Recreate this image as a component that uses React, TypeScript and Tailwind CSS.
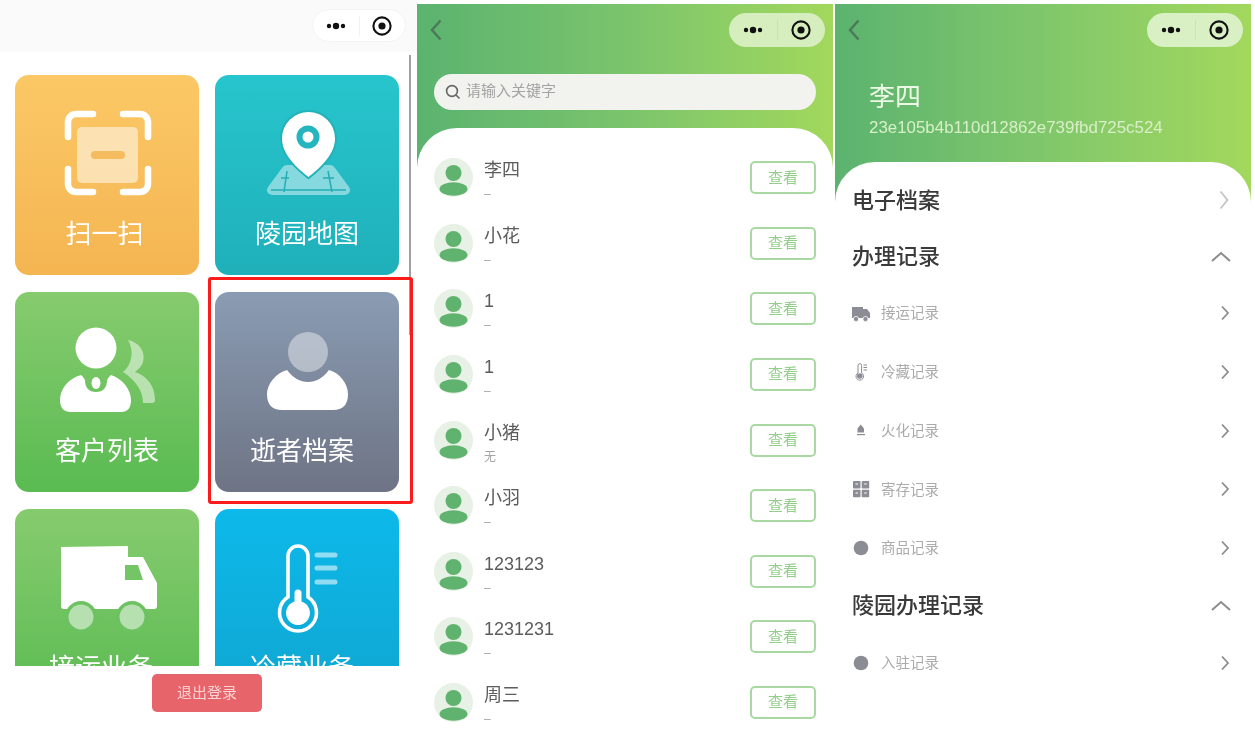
import type { ReactNode } from 'react';

type Card = { label: string; bg: string; labelClass?: string; icon: ReactNode };

function ScanIcon() {
  return (
    <svg width="184" height="140" viewBox="0 0 184 140">
      <rect x="62" y="52" width="61" height="56" rx="5" fill="#fff" fillOpacity="0.52" />
      <rect x="76" y="76" width="34" height="8" rx="4" fill="#f5bb5f" />
      <g fill="none" stroke="#fff" strokeWidth="6.5" strokeLinecap="round">
        <path d="M53 62V47a8 8 0 0 1 8-8h17" />
        <path d="M108 39h17a8 8 0 0 1 8 8v15" />
        <path d="M53 94v15a8 8 0 0 0 8 8h17" />
        <path d="M133 94v15a8 8 0 0 1-8 8h-17" />
      </g>
    </svg>
  );
}

function PinIcon() {
  const pin = 'M93.5 37a26.5 26.5 0 0 1 26.5 26.5c0 17-17 31-26.5 38.5c-9.5-7.5-26.5-21.5-26.5-38.5A26.5 26.5 0 0 1 93.5 37z';
  return (
    <svg width="184" height="140" viewBox="0 0 184 140">
      <path d="M72 90H115a6 6 0 0 1 5 3L134 112a5 5 0 0 1-4 8H57a5 5 0 0 1-4-8L67 93a6 6 0 0 1 5-3z" fill="#fff" fillOpacity="0.45" />
      <path d="M72 96L69 117M56 115H131M113 96L117 117M66 103H74M108 103H119" stroke="#23adb6" strokeWidth="1.5" fill="none" />
      <path d={pin} fill="#fff" stroke="#23b2ba" strokeWidth="4" paintOrder="stroke" />
      <circle cx="93" cy="62" r="11.5" fill="#25b5bf" />
      <circle cx="93" cy="62" r="5.5" fill="#fff" />
    </svg>
  );
}

function CustomerIcon() {
  return (
    <svg width="184" height="140" viewBox="0 0 184 140">
      <path d="M113 48C124 50 131 60 128 70C126 76 122 78 120 80C132 84 140 94 140 108Q140 111 137 111H128C128 98 120 88 108 80C116 74 120 60 113 48z" fill="#fff" fillOpacity="0.5" />
      <circle cx="81" cy="56" r="20.5" fill="#fff" />
      <path d="M66 83C52 87 45 98 45 108Q45 120 56 120H106Q116 120 116 108C116 98 108 87 96 83C94 85 93 86 92 88C92 96 88 100 81 100C74 100 70 96 70 88C69 86 68 85 66 83z" fill="#fff" />
      <ellipse cx="81" cy="91" rx="4.5" ry="6" fill="#fff" />
    </svg>
  );
}

function PersonIcon() {
  return (
    <svg width="184" height="140" viewBox="0 0 184 140">
      <circle cx="93" cy="60" r="20" fill="#fff" fillOpacity="0.42" />
      <path d="M72 78C78 86 85 90 93 90C101 90 108 86 114 78C125 81 133 92 133 102Q133 118 118 118H67Q52 118 52 102C52 92 61 81 72 78z" fill="#fff" />
    </svg>
  );
}

function TruckIcon() {
  return (
    <svg width="184" height="140" viewBox="0 0 184 140">
      <path d="M46 38L113 37V48H128L142 74V97Q142 100 139 100H49Q46 100 46 97z" fill="#fff" />
      <path d="M110 56H123L128 71H110z" fill="#74c566" />
      <circle cx="66" cy="108" r="16" fill="#6cc160" />
      <circle cx="117" cy="108" r="16" fill="#6cc160" />
      <circle cx="66" cy="108" r="12.5" fill="#fff" fillOpacity="0.5" />
      <circle cx="117" cy="108" r="12.5" fill="#fff" fillOpacity="0.5" />
    </svg>
  );
}

function ThermoIcon() {
  return (
    <svg width="184" height="140" viewBox="0 0 184 140">
      <path d="M73 47a10 10 0 0 1 20 0V88a18.5 18.5 0 1 1-20 0z" fill="none" stroke="#fff" strokeWidth="3.6" />
      <path d="M79.5 84a3.5 3.5 0 0 1 7 0V92.5a12 12 0 1 1-7 0z" fill="#fff" />
      <path d="M102 46H120M102 59H120M102 73H120" stroke="#fff" strokeOpacity="0.55" strokeWidth="5" strokeLinecap="round" />
    </svg>
  );
}

const cards: Card[] = [
  { label: '扫一扫', bg: 'from-[#fbc866] to-[#f4b551]', labelClass: 'pr-[5px]', icon: <ScanIcon /> },
  { label: '陵园地图', bg: 'from-[#27c5cd] to-[#1fb0ba]', icon: <PinIcon /> },
  { label: '客户列表', bg: 'from-[#86cb6e] to-[#59bb52]', icon: <CustomerIcon /> },
  { label: '逝者档案', bg: 'from-[#8a9cb3] to-[#6e7485]', labelClass: 'pr-[10px]', icon: <PersonIcon /> },
  { label: '接运业务', bg: 'from-[#86cb6e] to-[#59bb52]', labelClass: 'pr-[12px]', icon: <TruckIcon /> },
  { label: '冷藏业务', bg: 'from-[#0cb9ea] to-[#10a5d0]', labelClass: 'pr-[10px]', icon: <ThermoIcon /> },
];

const people = [
  { name: '李四', sub: '–' },
  { name: '小花', sub: '–' },
  { name: '1', sub: '–' },
  { name: '1', sub: '–' },
  { name: '小猪', sub: '无' },
  { name: '小羽', sub: '–' },
  { name: '123123', sub: '–' },
  { name: '1231231', sub: '–' },
  { name: '周三', sub: '–' },
];

function Capsule({ className }: { className: string }) {
  return (
    <div className={`flex items-center rounded-full ${className}`}>
      <div className="flex flex-1 justify-center">
        <svg width="24" height="10" viewBox="0 0 24 10" fill="#111">
          <circle cx="5" cy="5" r="2.2" />
          <circle cx="12" cy="5" r="3.2" />
          <circle cx="19" cy="5" r="2.2" />
        </svg>
      </div>
      <div className="h-[20px] w-px bg-black/5" />
      <div className="flex flex-1 justify-center">
        <svg width="22" height="22" viewBox="0 0 22 22" fill="none">
          <circle cx="11" cy="11" r="8.6" stroke="#111" strokeWidth="2.1" />
          <circle cx="11" cy="11" r="3.6" fill="#111" />
        </svg>
      </div>
    </div>
  );
}

function BackChevron() {
  return (
    <svg width="14" height="24" viewBox="0 0 14 24" fill="none">
      <path d="M10.5 2.5L2 12L10.5 21.5" stroke="#4c7a58" strokeWidth="2.5" />
    </svg>
  );
}

function Avatar() {
  return (
    <svg width="39" height="39" viewBox="0 0 39 39" className="shrink-0">
      <circle cx="19.5" cy="19.5" r="19.5" fill="#e8f1e5" />
      <circle cx="19.5" cy="15" r="8" fill="#5fb36f" />
      <ellipse cx="19.5" cy="31" rx="14" ry="6.8" fill="#5fb36f" />
    </svg>
  );
}

function HomePanel() {
  return (
    <div className="relative flex h-[741px] w-[417px] shrink-0 flex-col bg-white">
      <div className="flex h-[52px] justify-end bg-[#fafafa] pt-[9px] pr-[11px]">
        <Capsule className="h-[33px] w-[94px] border border-[#f3f3f3] bg-white" />
      </div>
      <div className="h-[614px] overflow-hidden pt-[23px] pl-[15px]">
        <div className="grid grid-cols-[184px_184px] gap-x-4 gap-y-[17px]">
          {cards.map((c) => (
            <div key={c.label} className={`h-[200px] rounded-[14px] bg-linear-to-b text-white ${c.bg}`}>
              {c.icon}
              <div className={`mt-[4px] text-center text-[26px] leading-[30px] ${c.labelClass ?? ''}`}>{c.label}</div>
            </div>
          ))}
        </div>
      </div>
      <div className="flex flex-1 justify-center pt-2 pr-[3px]">
        <button className="h-[38px] w-[110px] rounded-[5px] bg-[#e8646b] text-[15px] text-[#f8d5d5]">退出登录</button>
      </div>
      <div className="absolute top-[55px] left-[409px] h-[280px] w-[2px] bg-[#a0a0a0]" />
      <div className="absolute top-[277px] left-[208px] h-[227px] w-[205px] rounded-[3px] border-[3px] border-[#fb1b1b]" />
    </div>
  );
}

function ListPanel() {
  return (
    <div className="mt-1 h-[737px] w-[416px] shrink-0 overflow-hidden bg-white">
      <div className="bg-linear-to-r from-[#5bb36f] via-[#7ac46c] to-[#a2d85c] pt-[9px] pb-[40px]">
        <div className="flex items-center justify-between pr-[8px] pl-[13px]">
          <BackChevron />
          <Capsule className="h-[34px] w-[96px] bg-[#d6edbd]" />
        </div>
        <div className="mx-[17px] mt-[27px] mb-[18px] flex h-[36px] items-center gap-[5px] rounded-full bg-[#f2f2ef] px-[11px]">
          <svg width="16" height="16" viewBox="0 0 16 16" fill="none" stroke="#666" strokeWidth="1.6">
            <circle cx="7" cy="7" r="5.4" />
            <path d="M11 11L14.5 14.5" />
          </svg>
          <span className="-mt-[2px] text-[15px] text-[#a3a3a3]">请输入关键字</span>
        </div>
      </div>
      <div className="relative -mt-[40px] rounded-t-[40px] bg-white px-[17px] pt-[17px]">
        {people.map((p, i) => (
          <div key={i} className="flex h-[65.6px] items-center">
            <Avatar />
            <div className="ml-[11px] flex-1 pt-[5px]">
              <div className="text-[18px] leading-6 text-[#5c5c5c]">{p.name}</div>
              <div className="mt-[4px] text-[12px] leading-4 text-[#a5a5a5]">{p.sub}</div>
            </div>
            <button className="h-[33px] w-[66px] rounded-[5px] border-2 border-[#a9d8a3] text-[15px] text-[#93cf8a]">查看</button>
          </div>
        ))}
      </div>
    </div>
  );
}

function ChevronRight({ light }: { light?: boolean }) {
  return (
    <svg width="10" height="18" viewBox="0 0 10 18" fill="none" className={light ? '-ml-[2px] mr-[2px]' : ''}>
      <path d={light ? 'M1.5 0.5L8.5 9L1.5 17.5' : 'M2 2.5L8 9L2 15.5'} stroke={light ? '#c4c4c4' : '#8c8c8c'} strokeWidth="1.8" />
    </svg>
  );
}

function ChevronUp() {
  return (
    <svg width="20" height="11" viewBox="0 0 20 11" fill="none">
      <path d="M1 10L10 2L19 10" stroke="#8c8c8c" strokeWidth="2" />
    </svg>
  );
}

function RecordIcon({ kind }: { kind: string }) {
  return (
    <svg width="18" height="18" viewBox="0 0 18 18" fill="#8c8c95">
      {kind === 'truck' && (
        <>
          <path d="M0 3H11V5H15L18 9V14H0z" />
          <circle cx="4" cy="15" r="2.6" stroke="#fff" strokeWidth="0.8" />
          <circle cx="13.5" cy="15" r="2.6" stroke="#fff" strokeWidth="0.8" />
        </>
      )}
      {kind === 'thermo' && (
        <>
          <path d="M6 2.5a1.8 1.8 0 0 1 3.6 0V10a3.8 3.8 0 1 1-3.6 0z" fill="#fff" stroke="#8c8c95" strokeWidth="1" />
          <circle cx="7.8" cy="13" r="2.8" />
          <path d="M11.5 2H15M11.5 4.5H15M11.5 7H15" stroke="#8c8c95" strokeWidth="1" />
        </>
      )}
      {kind === 'fire' && (
        <>
          <path d="M8.7 2.5L12 6.5V10.5H5.5V6.5z" />
          <rect x="5" y="12" width="8" height="1.2" />
        </>
      )}
      {kind === 'grid' && (
        <>
          <rect x="1" y="1" width="7.5" height="7.5" rx="0.8" />
          <rect x="9.7" y="1" width="7.5" height="7.5" rx="0.8" />
          <rect x="1" y="9.7" width="7.5" height="7.5" rx="0.8" />
          <rect x="9.7" y="9.7" width="7.5" height="7.5" rx="0.8" />
          <path d="M3.5 4H6M12.2 4H14.7M3.5 13H6M12.2 13H14.7" stroke="#fff" strokeWidth="1.1" />
        </>
      )}
      {kind === 'dot' && <circle cx="9" cy="9" r="7.3" />}
    </svg>
  );
}

function RecordRow({ kind, label }: { kind: string; label: string }) {
  return (
    <div className="flex h-[58.7px] items-center pr-[21px] pl-[17px]">
      <RecordIcon kind={kind} />
      <span className="ml-[11px] flex-1 pt-[2px] text-[14.5px] text-[#ababab]">{label}</span>
      <ChevronRight />
    </div>
  );
}

function SectionRow({ label, right }: { label: string; right: ReactNode }) {
  return (
    <div className="flex h-[56px] items-center justify-between pr-[20px] pl-[17px]">
      <span className="text-[22px] font-medium text-[#3a3a3a]">{label}</span>
      {right}
    </div>
  );
}

function DetailPanel() {
  return (
    <div className="mt-1 ml-[2px] h-[737px] w-[416px] shrink-0 overflow-hidden bg-white">
      <div className="bg-linear-to-r from-[#5bb36f] via-[#80c76b] to-[#a2d85c] pt-[9px] pb-[40px]">
        <div className="flex items-center justify-between pr-[8px] pl-[13px]">
          <BackChevron />
          <Capsule className="h-[34px] w-[96px] bg-[#d9efc4]" />
        </div>
        <div className="mt-[34px] pl-[34px] text-[26px] leading-8 text-[#eef8e6]">李四</div>
        <div className="mt-[5px] mb-[24px] pl-[34px] text-[16.9px] leading-5 text-[#d8efc8]">23e105b4b110d12862e739fbd725c524</div>
      </div>
      <div className="relative -mt-[40px] rounded-t-[40px] bg-white pt-[10px]">
        <SectionRow label="电子档案" right={<ChevronRight light />} />
        <SectionRow label="办理记录" right={<ChevronUp />} />
        <RecordRow kind="truck" label="接运记录" />
        <RecordRow kind="thermo" label="冷藏记录" />
        <RecordRow kind="fire" label="火化记录" />
        <RecordRow kind="grid" label="寄存记录" />
        <RecordRow kind="dot" label="商品记录" />
        <SectionRow label="陵园办理记录" right={<ChevronUp />} />
        <RecordRow kind="dot" label="入驻记录" />
      </div>
    </div>
  );
}

export default function App() {
  return (
    <div className="flex h-[741px] w-[1255px] overflow-hidden bg-white font-['Liberation_Sans','Noto_Sans_CJK_SC',sans-serif] blur-[0.5px]">
      <HomePanel />
      <ListPanel />
      <DetailPanel />
    </div>
  );
}
